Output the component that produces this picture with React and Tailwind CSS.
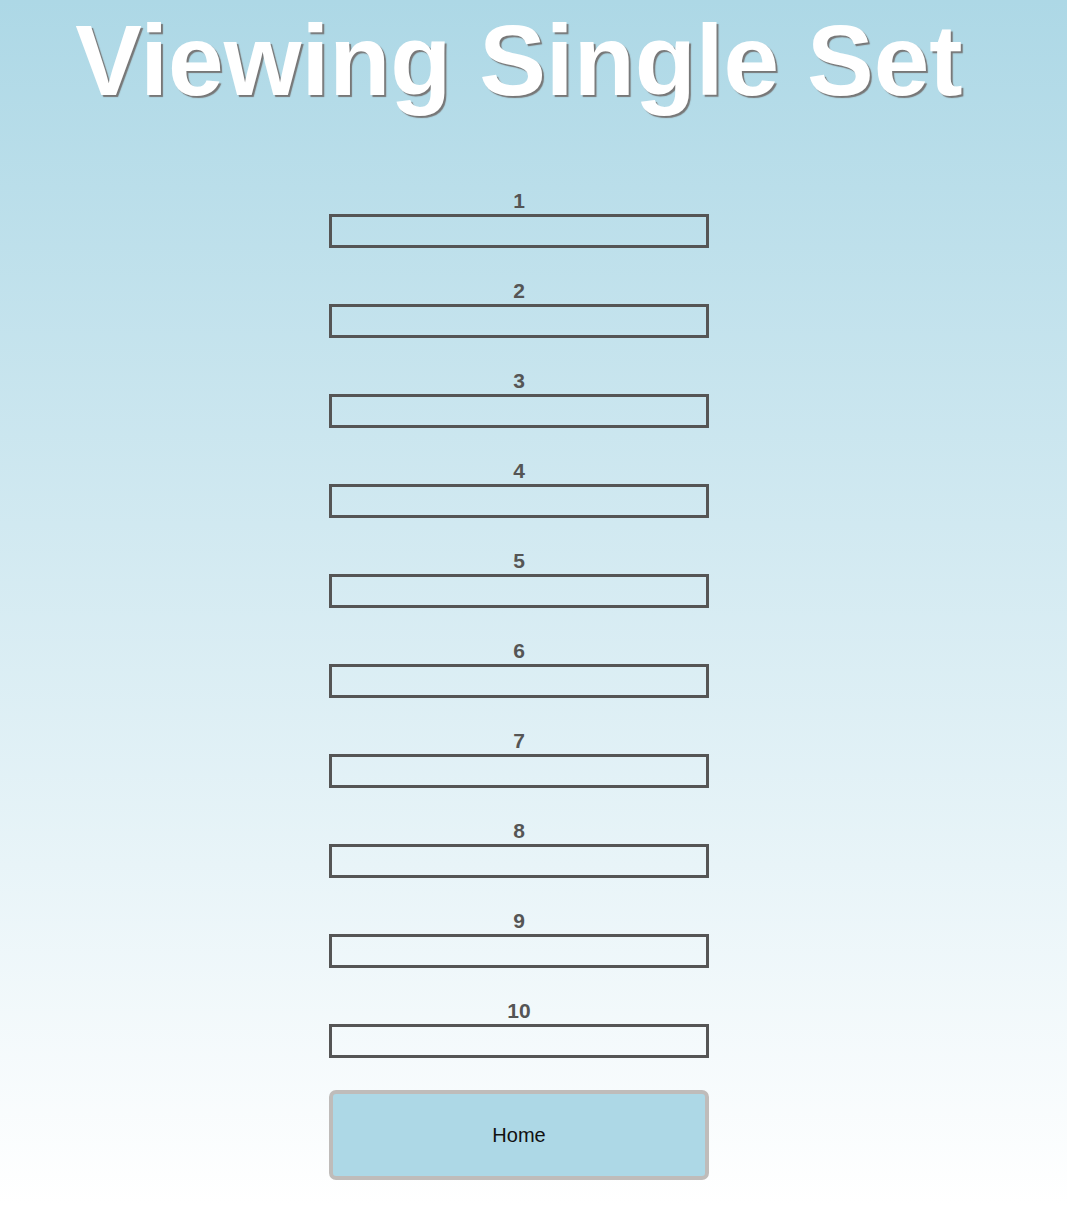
const slots = [1, 2, 3, 4, 5, 6, 7, 8, 9, 10];

export default function App() {
  return (
    <div className="min-h-screen bg-linear-to-b from-[#add8e6] to-white font-['Liberation_Sans',Arial,sans-serif] pr-[29px]">
      <h1 className="pt-[3px] text-center text-[100px] font-bold leading-[115px] text-white [text-shadow:2px_2px_1px_#777]">
        Viewing Single Set
      </h1>

      <div className="mx-auto mt-[71px] flex w-[380px] flex-col">
        {slots.map((n) => (
          <div key={n} className="mb-[31px] flex flex-col">
            <label className="text-center text-[21px] font-bold leading-[23px] text-[#555]">{n}</label>
            <input
              type="text"
              readOnly
              className="mt-[2px] h-[34px] w-full border-[3px] border-[#555] bg-transparent outline-none"
            />
          </div>
        ))}

        <button
          type="button"
          className="mt-[1px] h-[90px] w-full rounded-[7px] border-4 border-[#bfbcba] bg-[#add8e6] text-[20px] text-[#111]"
        >
          Home
        </button>
      </div>
    </div>
  );
}
